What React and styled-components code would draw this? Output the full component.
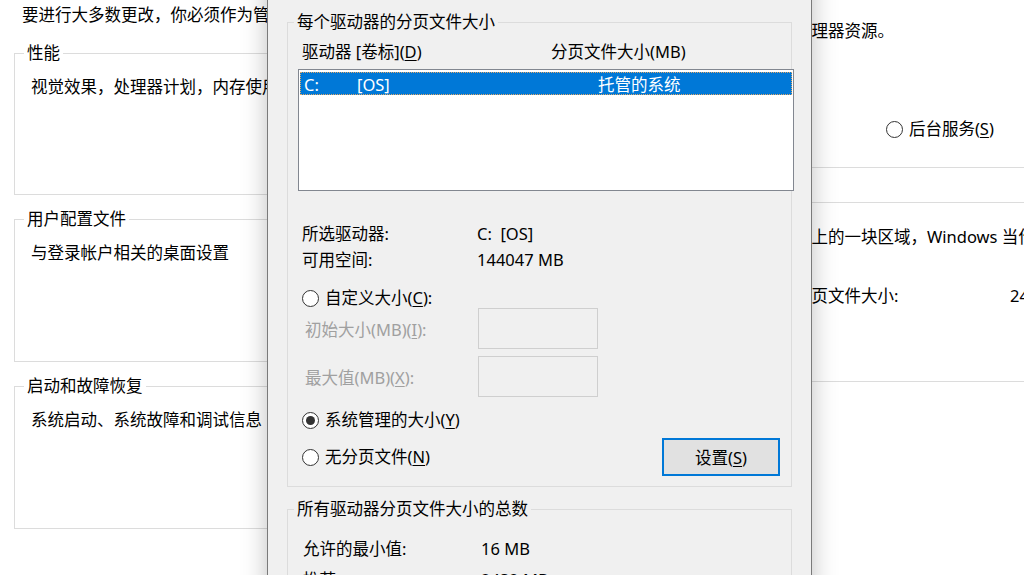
import React from "react";
import styled, { createGlobalStyle } from "styled-components";

const GlobalStyle = createGlobalStyle`
  html, body {
    margin: 0;
    padding: 0;
    background: #fff;
  }
  body {
    font-family: "Noto Sans", "Noto Sans CJK SC", sans-serif;
    font-size: 16.5px;
    color: #000;
  }
`;

const Desktop = styled.div`
  position: relative;
  width: 1024px;
  height: 575px;
  overflow: hidden;
  background: #fff;
`;

// windows lying on the desktop
const BackWindow = styled.div`
  position: absolute;
  top: ${p => p.$top}px;
  left: ${p => p.$left}px;
  width: ${p => p.$width}px;
  padding: ${p => p.$pad};
  box-sizing: border-box;
  background: #fff;
  display: flex;
  flex-direction: column;
`;

const Dialog = styled.div`
  position: absolute;
  left: 267px;
  top: -40px;
  width: 545px;
  height: 640px;
  box-sizing: border-box;
  background: #f0f0f0;
  border-left: 1px solid #7a7a7a;
  border-right: 1px solid #7a7a7a;
  box-shadow: 0 0 24px rgba(0, 0, 0, 0.25);
  padding: 17px 0 0 19px;
  display: flex;
  flex-direction: column;
`;

const Line = styled.div`
  line-height: ${p => p.$lh || 22}px;
  padding-left: ${p => p.$indent || 0}px;
  margin-top: ${p => p.$mt || 0}px;
  white-space: nowrap;
`;

const Group = styled.fieldset`
  margin: ${p => p.$margin || 0};
  padding: ${p => p.$pad || "0"};
  width: ${p => p.$width}px;
  height: ${p => (p.$height ? `${p.$height}px` : "auto")};
  box-sizing: border-box;
  border: 1px solid #dcdcdc;
  min-width: 0;
  flex-shrink: 0;
`;

// the legend sits after the fieldset's left padding, so the offset makes up for it
const Legend = styled.legend`
  margin-left: ${p => p.$offset}px;
  padding: 0 3px;
  line-height: 22px;
  white-space: nowrap;
`;

const Stack = styled.div`
  display: flex;
  flex-direction: column;
  gap: ${p => p.$gap || 0}px;
  margin-top: ${p => p.$mt || 0}px;
`;

const Key = styled.u`
  text-decoration: underline;
  text-underline-offset: 2px;
`;

const RadioLabel = styled.label`
  display: flex;
  align-items: center;
  gap: 6px;
  line-height: ${p => p.$lh || 20}px;
  padding-left: ${p => p.$indent || 0}px;
  margin-top: ${p => p.$mt || 0}px;
  white-space: nowrap;
`;

const RadioCircle = styled.span`
  width: 17px;
  height: 17px;
  box-sizing: border-box;
  border: 1px solid #333;
  border-radius: 50%;
  background: #fff;
  display: flex;
  align-items: center;
  justify-content: center;
  flex-shrink: 0;

  &::after {
    content: "";
    width: 9px;
    height: 9px;
    border-radius: 50%;
    background: ${p => (p.$checked ? "#333" : "transparent")};
  }
`;

const RadioRow = styled.div`
  display: flex;
  gap: ${p => p.$gap}px;
  margin-top: ${p => p.$mt || 0}px;
`;

const Checkbox = styled.span`
  width: 17px;
  height: 17px;
  box-sizing: border-box;
  border: 1px solid #333;
  background: #fff;
  flex-shrink: 0;
`;

const CheckRow = styled.label`
  display: flex;
  align-items: center;
  gap: 6px;
  height: 22px;
  margin-left: 9px;
  white-space: nowrap;
`;

const ColumnHeader = styled.div`
  display: grid;
  grid-template-columns: 249px auto;
  padding-left: 4px;
  line-height: 22px;
`;

const ListBox = styled.div`
  margin-top: 6px;
  width: 496px;
  height: 122px;
  box-sizing: border-box;
  border: 1px solid #828790;
  background: #fff;
  padding: 2px 1px;
`;

const ListRow = styled.div`
  display: grid;
  grid-template-columns: 53px 241px auto;
  align-items: center;
  height: 23px;
  padding-left: 4px;
  background: ${p => (p.$selected ? "#0078d7" : "transparent")};
  color: ${p => (p.$selected ? "#fff" : "#000")};
  outline: ${p => (p.$selected ? "1px dotted #e0a868" : "none")};
  outline-offset: -1px;
  white-space: nowrap;
`;

const InfoGrid = styled.div`
  display: grid;
  grid-template-columns: ${p => p.$col}px auto;
  row-gap: ${p => p.$rowGap || 0}px;
  padding-left: ${p => p.$indent}px;
  margin-top: ${p => p.$mt || 0}px;
  line-height: ${p => p.$lh || 22}px;
  white-space: nowrap;
`;

const SizeGrid = styled.div`
  display: grid;
  grid-template-columns: 173px 120px;
  grid-auto-rows: 41px;
  row-gap: 7px;
  align-items: center;
  padding-left: 7px;
`;

const DisabledLabel = styled.span`
  color: #a0a0a0;
  white-space: nowrap;
`;

const TextBox = styled.div`
  height: 41px;
  box-sizing: border-box;
  border: 1px solid #cfcfcf;
  background: #f0f0f0;
`;

const BottomRow = styled.div`
  display: flex;
  align-items: center;
  justify-content: space-between;
  margin: 8px 11px 0 0;
`;

const Button = styled.button`
  width: 118px;
  height: 38px;
  box-sizing: border-box;
  border: 2px solid #0078d7;
  background: #e1e1e1;
  font: inherit;
  color: #000;
  padding: 0;
`;

const Radio = ({ checked, children, ...rest }) => (
  <RadioLabel {...rest}>
    <RadioCircle $checked={checked} />
    <span>{children}</span>
  </RadioLabel>
);

export default function App() {
  return (
    <>
      <GlobalStyle />
      <Desktop>
        {/* 系统属性 - 高级 */}
        <BackWindow $top={0} $left={0} $width={700} $pad="4px 0 0 14px">
          <Line $indent={8}>要进行大多数更改，你必须作为管理员登录。</Line>
          <Stack $gap={13} $mt={16}>
            <Group $width={640} $height={153} $pad="12px 0 0 16px">
              <Legend $offset={-7}>性能</Legend>
              <Line>视觉效果，处理器计划，内存使用，以及虚拟内存</Line>
            </Group>
            <Group $width={640} $height={154} $pad="12px 0 0 16px">
              <Legend $offset={-7}>用户配置文件</Legend>
              <Line>与登录帐户相关的桌面设置</Line>
            </Group>
            <Group $width={640} $height={154} $pad="12px 0 0 16px">
              <Legend $offset={-7}>启动和故障恢复</Legend>
              <Line>系统启动、系统故障和调试信息</Line>
            </Group>
          </Stack>
        </BackWindow>

        {/* 性能选项 - 高级 */}
        <BackWindow $top={-14} $left={665} $width={420} $pad="0 0 0 14px">
          <Group $width={400} $height={182} $pad="12px 0 0 16px">
            <Legend $offset={-7}>处理器计划</Legend>
            <Line>选择如何分配处理器资源。</Line>
            <RadioRow $gap={114} $mt={76}>
              <Radio $lh={22}>程序(<Key>P</Key>)</Radio>
              <Radio $lh={22}>后台服务(<Key>S</Key>)</Radio>
            </RadioRow>
          </Group>
          <Group $width={400} $height={191} $margin="23px 0 0 0" $pad="13px 0 0 16px">
            <Legend $offset={-7}>虚拟内存</Legend>
            <Line>分页文件是硬盘上的一块区域，Windows 当作 RAM 使用。</Line>
            <InfoGrid $col={314} $indent={0} $mt={37}>
              <span>所有驱动器总分页文件大小:</span>
              <span>2432 MB</span>
            </InfoGrid>
          </Group>
        </BackWindow>

        {/* 虚拟内存 */}
        <Dialog>
          <CheckRow>
            <Checkbox />
            <span>自动管理所有驱动器的分页文件大小(<Key>A</Key>)</span>
          </CheckRow>

          <Group $width={505} $margin="12px 0 0 0" $pad="8px 0 10px 10px">
            <Legend $offset={-4}>每个驱动器的分页文件大小</Legend>
            <ColumnHeader>
              <span>驱动器 [卷标](<Key>D</Key>)</span>
              <span>分页文件大小(MB)</span>
            </ColumnHeader>
            <ListBox>
              <ListRow $selected>
                <span>C:</span>
                <span>[OS]</span>
                <span>托管的系统</span>
              </ListRow>
            </ListBox>

            <InfoGrid $col={175} $indent={4} $mt={30} $lh={26}>
              <span>所选驱动器:</span>
              <span>C:&nbsp;&nbsp;[OS]</span>
              <span>可用空间:</span>
              <span>144047 MB</span>
            </InfoGrid>

            <Radio $indent={4} $mt={15}>
              自定义大小(<Key>C</Key>):
            </Radio>
            <SizeGrid>
              <DisabledLabel>初始大小(MB)(<Key>I</Key>):</DisabledLabel>
              <TextBox />
              <DisabledLabel>最大值(MB)(<Key>X</Key>):</DisabledLabel>
              <TextBox />
            </SizeGrid>

            <Radio checked $indent={4} $mt={13}>
              系统管理的大小(<Key>Y</Key>)
            </Radio>
            <BottomRow>
              <Radio $indent={4}>
                无分页文件(<Key>N</Key>)
              </Radio>
              <Button>
                设置(<Key>S</Key>)
              </Button>
            </BottomRow>
          </Group>

          <Group $width={505} $margin="11px 0 0 0" $pad="18px 0 0 0">
            <Legend $offset={6}>所有驱动器分页文件大小的总数</Legend>
            <InfoGrid $col={178} $indent={15} $rowGap={9}>
              <span>允许的最小值:</span>
              <span>16 MB</span>
              <span>推荐:</span>
              <span>2432 MB</span>
              <span>当前已分配:</span>
              <span>2432 MB</span>
            </InfoGrid>
          </Group>
        </Dialog>
      </Desktop>
    </>
  );
}
